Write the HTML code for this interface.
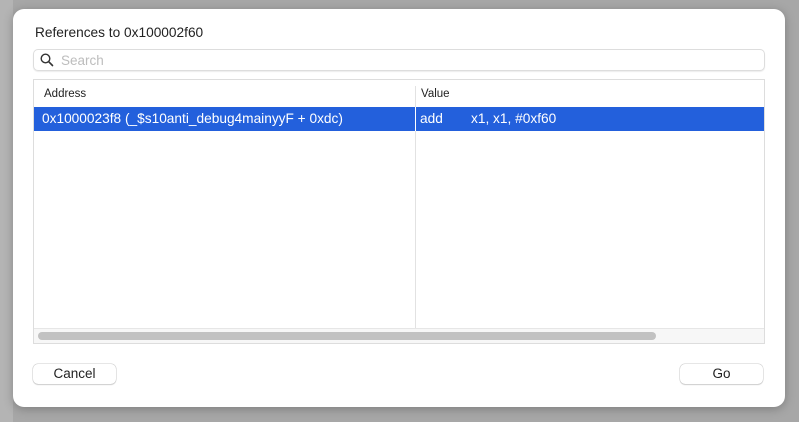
<!DOCTYPE html>
<html><head><style>
body{margin:0;width:799px;height:422px;background:#a7a7a7;overflow:hidden;font-family:"Liberation Sans",sans-serif;position:relative}
.dlg{position:absolute;left:13px;top:9px;width:772px;height:398px;background:#fff;border-radius:11px;box-shadow:0 2px 10px rgba(0,0,0,.25)}
.a{position:absolute}
</style></head><body>
<div class="a" style="left:0;top:0;width:13px;height:422px;background:#b4b4b4"></div>
<div class="dlg">
<div class="a" style="left:22px;top:16px;font-size:13.7px;color:#222">References to 0x100002f60</div>
<div class="a" style="left:20px;top:40px;width:730px;height:20px;border:1px solid #ddd;border-radius:5px;box-shadow:0 1px 1px rgba(0,0,0,.08)">
<svg class="a" style="left:6px;top:3px" width="14" height="14" viewBox="0 0 14 14"><circle cx="5.5" cy="5.5" r="4.3" fill="none" stroke="#333" stroke-width="1.4"/><path d="M8.7 8.7L12.5 12.5" stroke="#333" stroke-width="1.6" stroke-linecap="round"/></svg>
<div class="a" style="left:27px;top:3px;font-size:13.5px;color:#bdbdbd">Search</div></div>
<div class="a" style="left:20px;top:70px;width:730px;height:263px;border:1px solid #ddd;background:#fff;overflow:hidden">
<div class="a" style="left:10px;top:8px;font-size:11.5px;color:#222">Address</div>
<div class="a" style="left:387px;top:8px;font-size:11.5px;color:#222">Value</div>
<div class="a" style="left:381px;top:6px;width:1px;height:242px;background:#e2e2e2"></div>
<div class="a" style="left:0;top:27px;width:730px;height:24px;background:#2360dc;color:#fff;font-size:13.7px">
<div class="a" style="left:8px;top:4px">0x1000023f8 (_$s10anti_debug4mainyyF + 0xdc)</div>
<div class="a" style="left:381px;top:0;width:1px;height:24px;background:#fff"></div>
<div class="a" style="left:386px;top:4px">add</div>
<div class="a" style="left:437px;top:4px">x1, x1, #0xf60</div></div>
<div class="a" style="left:0;top:248px;width:730px;height:15px;background:#f7f7f7;border-top:1px solid #e6e6e6"></div>
<div class="a" style="left:4px;top:252px;width:618px;height:8px;background:#c2c2c2;border-radius:4px"></div>
</div>
<div class="a" style="left:20px;top:355px;width:83px;height:20px;border-radius:5px;box-shadow:0 0 0 .5px #ccc,0 1px 1px rgba(0,0,0,.2);font-size:13.5px;text-align:center;line-height:20px;color:#222">Cancel</div>
<div class="a" style="left:667px;top:355px;width:83px;height:20px;border-radius:5px;box-shadow:0 0 0 .5px #ccc,0 1px 1px rgba(0,0,0,.2);font-size:13.5px;text-align:center;line-height:20px;color:#222">Go</div>
</div>
</body></html>
